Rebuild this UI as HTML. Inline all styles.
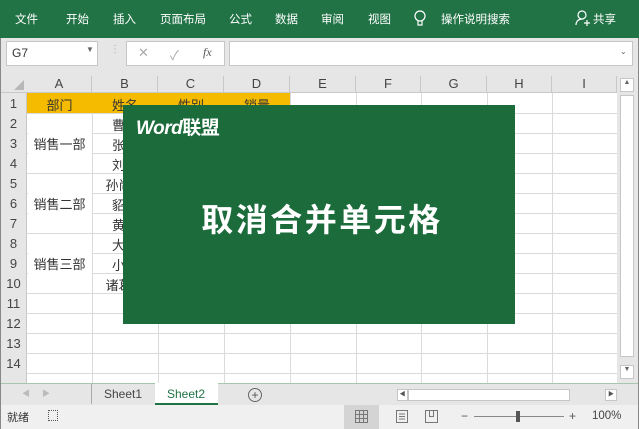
<!DOCTYPE html>
<html><head><meta charset="utf-8"><style>
*{margin:0;padding:0;box-sizing:border-box}
body{width:639px;height:429px;overflow:hidden;background:#e6e6e6;font-family:"Liberation Sans","Noto Sans CJK SC",sans-serif;position:relative;font-size:12px;color:#222}
.a{position:absolute}
.rib{left:0;top:0;width:639px;height:38px;background:#217346}
.c{position:absolute;text-align:center;font-size:13px;color:#333}
.vl{position:absolute;top:93px;width:1px;height:290px;background:#dadada}
.hl{position:absolute;left:27px;width:590px;height:1px;background:#dadada}
.rn{position:absolute;left:0;width:27px;text-align:center;font-size:13px;color:#444}
.ch{position:absolute;top:76px;height:17px;text-align:center;font-size:13px;color:#444;border-right:1px solid #c8c8c8}
</style></head><body>
<div class="a rib"></div>
<span class="a" style="left:15px;top:11px;color:#fff;font-size:11.5px">文件</span>
<span class="a" style="left:66px;top:11px;color:#fff;font-size:11.5px">开始</span>
<span class="a" style="left:113px;top:11px;color:#fff;font-size:11.5px">插入</span>
<span class="a" style="left:160px;top:11px;color:#fff;font-size:11.5px">页面布局</span>
<span class="a" style="left:229px;top:11px;color:#fff;font-size:11.5px">公式</span>
<span class="a" style="left:275px;top:11px;color:#fff;font-size:11.5px">数据</span>
<span class="a" style="left:321px;top:11px;color:#fff;font-size:11.5px">审阅</span>
<span class="a" style="left:368px;top:11px;color:#fff;font-size:11.5px">视图</span>
<svg class="a" style="left:413px;top:9px" width="14" height="20"><circle cx="7" cy="7" r="5" fill="none" stroke="#fff" stroke-width="1.2"/><path d="M5 12v4h4v-4" fill="none" stroke="#fff" stroke-width="1.2"/></svg>
<span class="a" style="left:441px;top:11px;color:#fff;font-size:11.5px">操作说明搜索</span>
<svg class="a" style="left:575px;top:9px" width="16" height="18"><circle cx="7" cy="6" r="4" fill="none" stroke="#fff" stroke-width="1.2"/><path d="M1 16c0-4 3-6 6-6" fill="none" stroke="#fff" stroke-width="1.2"/><path d="M12 11v6M9 14h6" stroke="#fff" stroke-width="1.2"/></svg>
<span class="a" style="left:593px;top:11px;color:#fff;font-size:11.5px">共享</span>

<div class="a" style="left:6px;top:41px;width:92px;height:25px;background:#fff;border:1px solid #c6c6c6"></div>
<span class="a" style="left:12px;top:46px;font-size:12px;color:#333">G7</span>
<span class="a" style="left:86px;top:45px;font-size:8px;color:#666">▼</span>
<span class="a" style="left:110px;top:44px;color:#aaa;font-size:10px">⋮</span>
<div class="a" style="left:126px;top:41px;width:99px;height:25px;background:#fff;border:1px solid #c6c6c6"></div>
<span class="a" style="left:138px;top:45px;color:#aaa;font-size:13px">✕</span>
<span class="a" style="left:170px;top:45px;color:#aaa;font-size:13px">✓</span>
<span class="a" style="left:203px;top:45px;color:#555;font-size:12px;font-style:italic;font-family:'Liberation Serif',serif">fx</span>
<div class="a" style="left:229px;top:41px;width:404px;height:25px;background:#fff;border:1px solid #c6c6c6"></div>
<span class="a" style="left:620px;top:47px;color:#666;font-size:8px">⌄</span>

<div class="a" style="left:0;top:73px;width:617px;height:20px;background:#e6e6e6"></div>
<div class="a" style="left:1px;top:93px;width:26px;height:290px;background:#e6e6e6;border-right:1px solid #c8c8c8"></div>
<div class="a" style="left:27px;top:93px;width:590px;height:290px;background:#fff"></div>
<svg class="a" style="left:14px;top:80px" width="10" height="10"><path d="M10 0V10H0Z" fill="#b8b8b8"/></svg>
<div class="ch" style="left:27px;width:65px">A</div>
<div class="ch" style="left:92px;width:66px">B</div>
<div class="ch" style="left:158px;width:66px">C</div>
<div class="ch" style="left:224px;width:66px">D</div>
<div class="ch" style="left:290px;width:66px">E</div>
<div class="ch" style="left:356px;width:65px">F</div>
<div class="ch" style="left:421px;width:66px">G</div>
<div class="ch" style="left:487px;width:65px">H</div>
<div class="ch" style="left:552px;width:65px">I</div>
<div class="a" style="left:0;top:92px;width:617px;height:1px;background:#c8c8c8"></div>

<div class="vl" style="left:92px"></div><div class="vl" style="left:158px"></div><div class="vl" style="left:224px"></div><div class="vl" style="left:290px"></div><div class="vl" style="left:356px"></div><div class="vl" style="left:421px"></div><div class="vl" style="left:487px"></div><div class="vl" style="left:552px"></div>
<div class="hl" style="top:113px"></div><div class="hl" style="top:133px"></div><div class="hl" style="top:153px"></div><div class="hl" style="top:173px"></div><div class="hl" style="top:193px"></div><div class="hl" style="top:213px"></div><div class="hl" style="top:233px"></div><div class="hl" style="top:253px"></div><div class="hl" style="top:273px"></div><div class="hl" style="top:293px"></div><div class="hl" style="top:313px"></div><div class="hl" style="top:333px"></div><div class="hl" style="top:353px"></div><div class="hl" style="top:373px"></div>
<div class="a" style="left:28px;top:114px;width:64px;height:59px;background:#fff"></div>
<div class="a" style="left:28px;top:174px;width:64px;height:59px;background:#fff"></div>
<div class="a" style="left:28px;top:234px;width:64px;height:59px;background:#fff"></div>
<div class="a" style="left:27px;top:93px;width:263px;height:20px;background:#f5bb00"></div>
<div class="c" style="left:27px;top:95px;width:65px">部门</div>
<div class="c" style="left:92px;top:95px;width:66px">姓名</div>
<div class="c" style="left:158px;top:95px;width:66px">性别</div>
<div class="c" style="left:224px;top:95px;width:66px">销量</div>
<div class="c" style="left:27px;top:134px;width:65px">销售一部</div>
<div class="c" style="left:27px;top:194px;width:65px">销售二部</div>
<div class="c" style="left:27px;top:254px;width:65px">销售三部</div>
<div class="c" style="left:92px;top:115px;width:66px">曹操</div>
<div class="c" style="left:92px;top:135px;width:66px">张飞</div>
<div class="c" style="left:92px;top:155px;width:66px">刘备</div>
<div class="c" style="left:92px;top:175px;width:66px">孙尚香</div>
<div class="c" style="left:92px;top:195px;width:66px">貂蝉</div>
<div class="c" style="left:92px;top:215px;width:66px">黄忠</div>
<div class="c" style="left:92px;top:235px;width:66px">大乔</div>
<div class="c" style="left:92px;top:255px;width:66px">小乔</div>
<div class="c" style="left:92px;top:275px;width:66px">诸葛亮</div>

<div class="rn" style="top:96px">1</div><div class="rn" style="top:116px">2</div><div class="rn" style="top:136px">3</div><div class="rn" style="top:156px">4</div><div class="rn" style="top:176px">5</div><div class="rn" style="top:196px">6</div><div class="rn" style="top:216px">7</div><div class="rn" style="top:236px">8</div><div class="rn" style="top:256px">9</div><div class="rn" style="top:276px">10</div><div class="rn" style="top:296px">11</div><div class="rn" style="top:316px">12</div><div class="rn" style="top:336px">13</div><div class="rn" style="top:356px">14</div>

<div class="a" style="left:617px;top:76px;width:20px;height:307px;background:#e6e6e6"></div>
<div class="a" style="left:620px;top:78px;width:14px;height:14px;background:#fff;border:1px solid #c6c6c6;font-size:7px;text-align:center;color:#666">▲</div>
<div class="a" style="left:620px;top:95px;width:14px;height:262px;background:#fff;border:1px solid #c6c6c6"></div>
<div class="a" style="left:620px;top:365px;width:14px;height:14px;background:#fff;border:1px solid #c6c6c6;font-size:7px;text-align:center;color:#666">▼</div>

<div class="a" style="left:123px;top:105px;width:392px;height:219px;background:#1b6b3b"></div>
<div class="a" style="left:136px;top:113px;color:#fff;font-size:19px;font-weight:bold;font-style:italic;letter-spacing:-0.5px">Word<span style="font-style:normal">联盟</span></div>
<div class="a" style="left:126px;top:195px;width:392px;text-align:center;color:#fff;font-size:32px;font-weight:bold;letter-spacing:2.5px">取消合并单元格</div>

<div class="a" style="left:0;top:383px;width:639px;height:22px;background:#e6e6e6;border-top:1px solid #a9c6ad"></div>
<span class="a" style="left:22px;top:388px;color:#bbb;font-size:8px">◀</span>
<span class="a" style="left:42px;top:388px;color:#bbb;font-size:8px">▶</span>
<div class="a" style="left:91px;top:384px;width:1px;height:20px;background:#aaa"></div>
<span class="a" style="left:104px;top:387px;font-size:12px;color:#444">Sheet1</span>
<div class="a" style="left:155px;top:383px;width:63px;height:22px;background:#fff;border-bottom:2px solid #217346"></div>
<span class="a" style="left:167px;top:387px;font-size:12px;color:#217346">Sheet2</span>
<div class="a" style="left:248px;top:388px;width:14px;height:14px;border:1px solid #666;border-radius:50%;text-align:center;line-height:12px;font-size:12px;color:#555">+</div>
<div class="a" style="left:397px;top:389px;width:11px;height:12px;background:#fff;border:1px solid #c6c6c6;font-size:6px;color:#555;line-height:10px;text-align:center">◀</div>
<div class="a" style="left:408px;top:389px;width:162px;height:12px;background:#fff;border:1px solid #c6c6c6"></div>
<div class="a" style="left:605px;top:389px;width:12px;height:12px;background:#fff;border:1px solid #c6c6c6;font-size:6px;color:#555;line-height:10px;text-align:center">▶</div>

<div class="a" style="left:0;top:405px;width:639px;height:24px;background:#f0f0f0"></div>
<span class="a" style="left:7px;top:409px;font-size:11px;color:#333">就绪</span>
<div class="a" style="left:48px;top:410px;width:10px;height:11px;border:1px dotted #555"></div>
<div class="a" style="left:344px;top:405px;width:35px;height:24px;background:#d4d4d4"></div>
<svg class="a" style="left:355px;top:410px" width="13" height="13"><path d="M.5.5h12v12H.5zM4.5.5v12M8.5.5v12M.5 4.5h12M.5 8.5h12" fill="none" stroke="#777"/></svg>
<svg class="a" style="left:396px;top:410px" width="12" height="13"><path d="M.5.5h11v12H.5zM3 4h6M3 6.5h6M3 9h6" fill="none" stroke="#777"/></svg>
<svg class="a" style="left:425px;top:410px" width="13" height="13"><path d="M.5.5h12v12H.5zM4.5.5v6h4v-6" fill="none" stroke="#777"/></svg>
<span class="a" style="left:461px;top:409px;font-size:12px;color:#555">−</span>
<div class="a" style="left:474px;top:416px;width:90px;height:1px;background:#888"></div>
<div class="a" style="left:516px;top:411px;width:4px;height:11px;background:#555"></div>
<span class="a" style="left:569px;top:409px;font-size:12px;color:#555">+</span>
<span class="a" style="left:592px;top:410px;font-size:11.5px;color:#444">100%</span>
<div class="a" style="left:0;top:38px;width:1px;height:391px;background:#888"></div>
<div class="a" style="left:638px;top:38px;width:1px;height:391px;background:#888"></div>
</body></html>
